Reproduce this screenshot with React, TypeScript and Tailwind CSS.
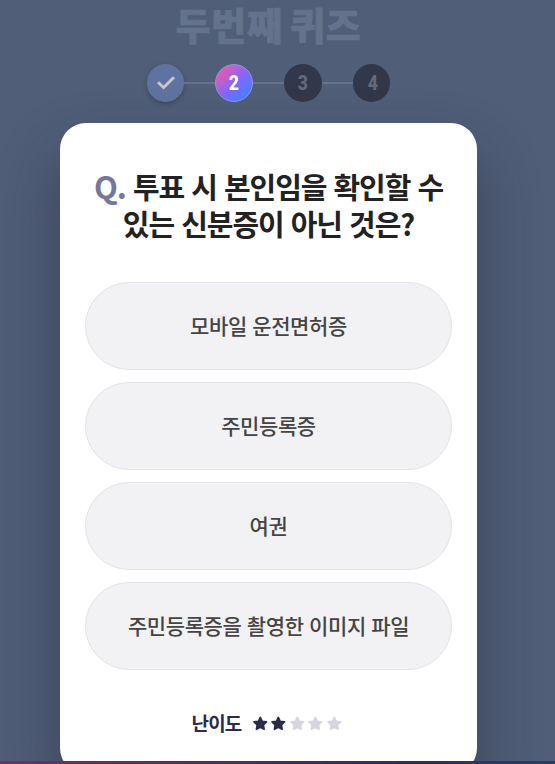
import React from "react";

const options = ["모바일 운전면허증", "주민등록증", "여권", "주민등록증을 촬영한 이미지 파일"];

function Star({ filled }: { filled: boolean }) {
  return (
    <svg viewBox="0 0 24 24" className={`h-[17px] w-[18.6px] ${filled ? "text-[#2b2b4b]" : "text-[#d5d6df]"}`}>
      <path
        d="M12 3.4 L14.7 8.9 L20.8 9.8 L16.4 14.1 L17.4 20.1 L12 17.3 L6.6 20.1 L7.6 14.1 L3.2 9.8 L9.3 8.9 Z"
        fill="currentColor"
        stroke="currentColor"
        strokeWidth="2.4"
        strokeLinejoin="round"
      />
    </svg>
  );
}

function Line() {
  return <div className="h-[2px] w-[31px] bg-[#65728c]" />;
}

function Digit({ children }: { children: React.ReactNode }) {
  return (
    <span className="inline-block scale-x-[0.88] font-['Roboto',sans-serif] text-[20px] leading-none font-extrabold">
      {children}
    </span>
  );
}

export default function App() {
  return (
    <div className="flex h-[764px] w-[555px] flex-col overflow-hidden bg-[#505e78] font-['Noto_Sans_CJK_KR',sans-serif]">
      <main className="flex h-[761px] shrink-0 flex-col overflow-hidden">
        <h1 className="ml-[-18px] h-[48px] text-center text-[38px] leading-[48px] font-black tracking-[0.8px] text-[#65728b] [-webkit-text-stroke:0.7px_#65728b] [word-spacing:-2.5px]">
          두번째 퀴즈
        </h1>
        <div className="mt-[16px] ml-[147px] flex h-[38px] items-center">
          <div className="flex h-[38px] w-[37px] items-center justify-center rounded-full bg-[#6073a0] shadow-[0_2px_5px_rgba(30,40,65,0.4)]">
            <svg viewBox="0 0 20 16" className="h-[16px] w-[20px]" fill="none" stroke="#c8c8c8" strokeWidth="2.9">
              <path d="M2 7.3 L7.6 12.6 L18 2.3" />
            </svg>
          </div>
          <Line />
          <div className="flex h-[38px] w-[38px] items-center justify-center rounded-full border border-[#9a8fe5] bg-[linear-gradient(135deg,#ff579f_5%,#7b68ff_55%,#328dff_95%)] text-white">
            <Digit>2</Digit>
          </div>
          <Line />
          <div className="flex h-[38px] w-[38px] items-center justify-center rounded-full bg-[#32384a] text-[#646a7b]">
            <Digit>3</Digit>
          </div>
          <Line />
          <div className="flex h-[38px] w-[37px] items-center justify-center rounded-full bg-[#32384a] pl-[2px] text-[#646a7b]">
            <Digit>4</Digit>
          </div>
        </div>
        <section className="mt-[21px] ml-[60px] flex h-[651px] w-[417px] shrink-0 flex-col items-center rounded-[26px] bg-white shadow-[0_32px_60px_rgba(35,38,50,0.48)]">
          <h2 className="mt-[45px] text-center text-[29px] leading-[37px] font-bold tracking-[-1.07px] whitespace-nowrap text-[#222222] [word-spacing:1.6px]">
            <span className="text-[31px] leading-[36px] font-bold text-[#75779f]">Q.</span> 투표 시 본인임을 확인할 수
            <br />
            있는 신분증이 아닌 것은?
          </h2>
          <div className="mt-[40px] flex w-[367px] flex-col gap-3">
            {options.map((option) => (
              <button
                key={option}
                className="flex h-[88px] items-center justify-center rounded-full border border-[#e2e2e9] bg-[#f2f2f5] text-[21px] font-medium tracking-[-0.4px] text-[#444444] [word-spacing:1.1px]"
              >
                {option}
              </button>
            ))}
          </div>
          <div className="mt-[39px] flex h-[28px] items-center pr-[2px] text-[19px] font-bold tracking-[-0.8px] text-[#2b2b4b]">
            <span className="mr-[9px]">난이도</span>
            {[1, 2, 3, 4, 5].map((n) => (
              <Star key={n} filled={n <= 2} />
            ))}
          </div>
        </section>
      </main>
      <div className="h-[3px] shrink-0 bg-[linear-gradient(90deg,#7b2b65,#302c64_75%,#2b3b63)]" />
    </div>
  );
}
